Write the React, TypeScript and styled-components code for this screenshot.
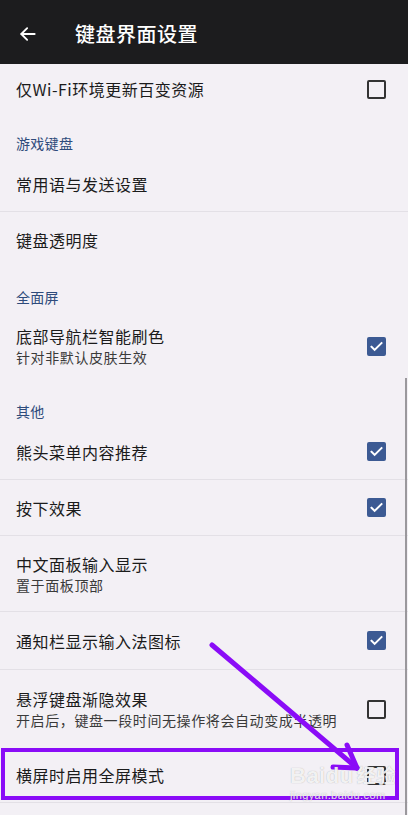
import styled, { createGlobalStyle } from 'styled-components';

const GlobalStyle = createGlobalStyle`
  html, body {
    margin: 0;
    padding: 0;
    background: #f3f0f5;
  }
  * {
    box-sizing: border-box;
  }
`;

const Page = styled.div`
  position: relative;
  width: 408px;
  height: 815px;
  overflow: hidden;
  background: #f3f0f5;
  font-family: "Noto Sans CJK SC", "Noto Sans", sans-serif;
`;

const TopBar = styled.header`
  height: 64px;
  background: #1c1c1e;
  display: flex;
  align-items: center;
  padding: 4px 0 0 18px;
  color: #ffffff;

  svg {
    width: 20px;
    height: 20px;
  }
`;

const TopTitle = styled.h1`
  margin: 0 0 0 37px;
  font-size: 20px;
  font-weight: 500;
  letter-spacing: 0.5px;
  line-height: 28px;
`;

const SectionHeader = styled.div`
  height: 42px;
  padding: 20px 16px 0;
  font-size: 14px;
  line-height: 18px;
  letter-spacing: 0.3px;
  color: #2e4b7b;
`;

const Row = styled.div<{ $height: number; $divider?: boolean }>`
  height: ${p => p.$height}px;
  display: flex;
  align-items: center;
  justify-content: space-between;
  padding: 0 22px 0 16px;
  border-bottom: ${p => (p.$divider ? '1px solid #e3e0e6' : 'none')};
`;

const TextBlock = styled.div`
  display: flex;
  flex-direction: column;
`;

const Label = styled.div`
  font-size: 16px;
  line-height: 22px;
  letter-spacing: 0.5px;
  color: #1b1b1b;
`;

const Hint = styled.div`
  font-size: 14px;
  line-height: 20px;
  letter-spacing: 0.6px;
  color: #3a3a3a;
`;

const Box = styled.div<{ $checked?: boolean }>`
  flex: none;
  width: 19px;
  height: 19px;
  border-radius: 2px;
  border: 2px solid ${p => (p.$checked ? '#3c5a93' : '#333333')};
  background: ${p => (p.$checked ? '#3c5a93' : 'transparent')};
  display: flex;
  align-items: center;
  justify-content: center;

  svg {
    width: 15px;
    height: 15px;
  }
`;

const ScrollThumb = styled.div`
  position: absolute;
  right: 1px;
  top: 378px;
  bottom: 0;
  width: 2px;
  background: #9a989c;
`;

const Highlight = styled.div`
  position: absolute;
  left: 1px;
  top: 748px;
  width: 398px;
  height: 52px;
  border: 4px solid #8a0cf7;
  pointer-events: none;
`;

const ArrowLayer = styled.svg`
  position: absolute;
  left: 0;
  top: 0;
  width: 408px;
  height: 815px;
  pointer-events: none;
`;

const Watermark = styled.div`
  position: absolute;
  left: 290px;
  top: 762px;
  color: rgba(255, 255, 255, 0.85);
  font-family: "Liberation Sans", Arial, sans-serif;
  text-shadow: 0 0 1px rgba(120, 120, 120, 0.6);
  pointer-events: none;
`;

const MarkTop = styled.div`
  font-size: 22px;
  font-weight: 700;
  line-height: 26px;
  letter-spacing: 0.5px;

  span {
    font-family: "Noto Sans CJK SC", sans-serif;
    font-size: 19px;
    margin-left: 3px;
  }
`;

const MarkUrl = styled.div`
  font-size: 11px;
  line-height: 12px;
  letter-spacing: 0.4px;
`;

const Check = ({ checked }: { checked?: boolean }) => (
  <Box $checked={checked}>
    {checked && (
      <svg viewBox="0 0 24 24" fill="none" stroke="#ffffff" strokeWidth="3.2" strokeLinecap="square">
        <path d="M4 12.5l5 5L20 6.5" />
      </svg>
    )}
  </Box>
);

type Item =
  | { kind: 'section'; title: string }
  | { kind: 'row'; label: string; hint?: string; height: number; check?: boolean; checked?: boolean; divider?: boolean };

const items: Item[] = [
  { kind: 'row', label: '仅Wi-Fi环境更新百变资源', height: 50, check: true },
  { kind: 'section', title: '游戏键盘' },
  { kind: 'row', label: '常用语与发送设置', height: 56, divider: true },
  { kind: 'row', label: '键盘透明度', height: 56 },
  { kind: 'section', title: '全面屏' },
  { kind: 'row', label: '底部导航栏智能刷色', hint: '针对非默认皮肤生效', height: 72, check: true, checked: true },
  { kind: 'section', title: '其他' },
  { kind: 'row', label: '熊头菜单内容推荐', height: 56, check: true, checked: true, divider: true },
  { kind: 'row', label: '按下效果', height: 56, check: true, checked: true, divider: true },
  { kind: 'row', label: '中文面板输入显示', hint: '置于面板顶部', height: 76, divider: true },
  { kind: 'row', label: '通知栏显示输入法图标', height: 58, check: true, checked: true, divider: true },
  { kind: 'row', label: '悬浮键盘渐隐效果', hint: '开启后，键盘一段时间无操作将会自动变成半透明', height: 78, check: true },
  { kind: 'row', label: '横屏时启用全屏模式', height: 55, check: true, divider: true },
];

export default function App() {
  return (
    <>
      <GlobalStyle />
      <Page>
        <TopBar>
          <svg viewBox="0 0 24 24" fill="none" stroke="#ffffff" strokeWidth="2.2" strokeLinecap="round" strokeLinejoin="round">
            <path d="M20 12H4" />
            <path d="M11 5l-7 7 7 7" />
          </svg>
          <TopTitle>键盘界面设置</TopTitle>
        </TopBar>

        {items.map((item, i) =>
          item.kind === 'section' ? (
            <SectionHeader key={i}>{item.title}</SectionHeader>
          ) : (
            <Row key={i} $height={item.height} $divider={item.divider}>
              <TextBlock>
                <Label>{item.label}</Label>
                {item.hint && <Hint>{item.hint}</Hint>}
              </TextBlock>
              {item.check && <Check checked={item.checked} />}
            </Row>
          )
        )}

        <ScrollThumb />
        <Highlight />
        <ArrowLayer viewBox="0 0 408 815">
          <g stroke="#8a0cf7" strokeWidth="5" strokeLinecap="round" fill="none">
            <path d="M212 645L357 768" />
            <path d="M357 768L347 745" />
            <path d="M357 768L333 767" />
          </g>
        </ArrowLayer>
        <Watermark>
          <MarkTop>
            Baidu<span>经验</span>
          </MarkTop>
          <MarkUrl>jingyan.baidu.com</MarkUrl>
        </Watermark>
      </Page>
    </>
  );
}
